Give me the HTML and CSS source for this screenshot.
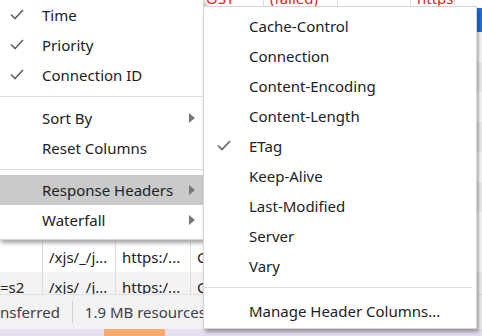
FILE: index.html
```html
<!DOCTYPE html>
<html lang="en">
<head>
  <meta charset="UTF-8" />
  <title>Network - Header Columns</title>
  <link rel="stylesheet" href="styles.css">
</head>
<body>
  <div class="panel">
    <div class="row top">
      <div class="cell w190"></div>
      <div class="cell w73 red">POST</div>
      <div class="cell w74 red">(failed)</div>
      <div class="cell w73"></div>
      <div class="cell red">https</div>
    </div>
    <div class="rows">
      <div class="row selected"></div>
      <div class="row"></div>
      <div class="row alt"></div>
      <div class="row"></div>
      <div class="row alt"></div>
      <div class="row"></div>
      <div class="row alt"></div>
      <div class="row"></div>
      <div class="row">
        <div class="cell c1"></div>
        <div class="cell c2">/xjs/_/j...</div>
        <div class="cell c3">https:/...</div>
        <div class="cell c4">G</div>
      </div>
      <div class="row alt">
        <div class="cell c1">=s2</div>
        <div class="cell c2">/xjs/_/j...</div>
        <div class="cell c3">https:/...</div>
        <div class="cell c4">G</div>
      </div>
    </div>
    <div class="status">
      <span class="seg">nsferred</span>
      <span class="seg">1.9 MB resources</span>
    </div>
    <div class="timeline">
      <div class="bar"></div>
    </div>
  </div>

  <div class="menu main-menu">
    <div class="item"><svg class="check" width="14" height="11" viewBox="0 0 14 11"><polyline points="1,5.5 5,9.5 13,1" /></svg>Time</div>
    <div class="item"><svg class="check" width="14" height="11" viewBox="0 0 14 11"><polyline points="1,5.5 5,9.5 13,1" /></svg>Priority</div>
    <div class="item"><svg class="check" width="14" height="11" viewBox="0 0 14 11"><polyline points="1,5.5 5,9.5 13,1" /></svg>Connection ID</div>
    <div class="sep first"></div>
    <div class="item">Sort By<span class="arrow"></span></div>
    <div class="item">Reset Columns</div>
    <div class="sep"></div>
    <div class="item active">Response Headers<span class="arrow"></span></div>
    <div class="item">Waterfall<span class="arrow"></span></div>
  </div>

  <div class="menu sub-menu">
    <div class="item">Cache-Control</div>
    <div class="item">Connection</div>
    <div class="item">Content-Encoding</div>
    <div class="item">Content-Length</div>
    <div class="item"><svg class="check" width="14" height="11" viewBox="0 0 14 11"><polyline points="1,5.5 5,9.5 13,1" /></svg>ETag</div>
    <div class="item">Keep-Alive</div>
    <div class="item">Last-Modified</div>
    <div class="item">Server</div>
    <div class="item">Vary</div>
    <div class="sep"></div>
    <div class="item">Manage Header Columns...</div>
  </div>
</body>
</html>
```
FILE: styles.css
```css
body {
  margin: 0;
  width: 482px;
  height: 336px;
  overflow: hidden;
  font-family: 'Noto Sans', 'Open Sans', sans-serif;
  font-size: 15px;
  color: #202124;
  background: #fff;
  position: relative;
}

.panel {
  display: flex;
  flex-direction: column;
  height: 336px;
}

.row {
  display: flex;
  height: 30px;
  flex-shrink: 0;
}

.row.alt {
  background: #f3f3f3;
}

.row.selected {
  height: 24px;
  background: #1a73e8;
}

.row.top {
  height: 8px;
  overflow: hidden;
}

.rows .row:last-child {
  height: 22px;
  overflow: hidden;
}

.cell {
  border-right: 1px solid #dadce0;
  padding-left: 6px;
  line-height: 30px;
  white-space: nowrap;
  overflow: hidden;
  box-sizing: border-box;
}

.c1 { width: 43px; padding-left: 0; }
.c2 { width: 73px; }
.c3 { width: 75px; }
.c4 { width: 30px; }

.w190 { width: 191px; }
.w73 { width: 73px; }
.w74 { width: 74px; }

.row.top .cell {
  line-height: 8px;
}

.red {
  color: #e0261b;
  position: relative;
  top: -6px;
  height: 14px;
}

.status {
  height: 35px;
  background: #f3f3f3;
  border-top: 1px solid #e0e0e0;
  box-sizing: border-box;
  display: flex;
  align-items: center;
  flex-shrink: 0;
}

.status .seg {
  padding-right: 12px;
  line-height: 22px;
  color: #3c4043;
}

.status .seg:first-child {
  border-right: 1px solid #d0d0d0;
}

.status .seg + .seg {
  padding-left: 12px;
}

.timeline {
  flex: 1;
  background: #e8def0;
}

.bar {
  margin-left: 104px;
  width: 61px;
  height: 100%;
  background: #f7a86e;
}

/* context menus */
.menu {
  position: absolute;
  background: #fff;
  border: 1px solid #d6d6d6;
  box-shadow: 2px 3px 4px rgba(0, 0, 0, 0.35);
}

.main-menu {
  left: -1px;
  top: -1px;
  width: 203px;
  padding-top: 0;
  padding-bottom: 4px;
}

.sub-menu {
  left: 203px;
  top: 6px;
  width: 272px;
  padding-top: 4px;
  padding-bottom: 2px;
}

.item {
  position: relative;
  height: 30px;
  line-height: 30px;
  padding-left: 42px;
  white-space: nowrap;
}

.sub-menu .item {
  padding-left: 45px;
}

.item.active {
  background: #cacaca;
}

.check {
  position: absolute;
  left: 10px;
  top: 9px;
}

.check polyline {
  fill: none;
  stroke: #666;
  stroke-width: 1.7;
}

.sub-menu .check {
  left: 13px;
}

.arrow {
  position: absolute;
  right: 8px;
  top: 10px;
  width: 0;
  height: 0;
  border-left: 6px solid #777;
  border-top: 5px solid transparent;
  border-bottom: 5px solid transparent;
}

.sep {
  height: 1px;
  background: #dcdcdc;
  margin: 6px 0 5px;
}

.main-menu .sep.first {
  margin: 6px 0 6px;
}

.sub-menu .sep {
  margin: 6px 4px 8px 0;
}
```
